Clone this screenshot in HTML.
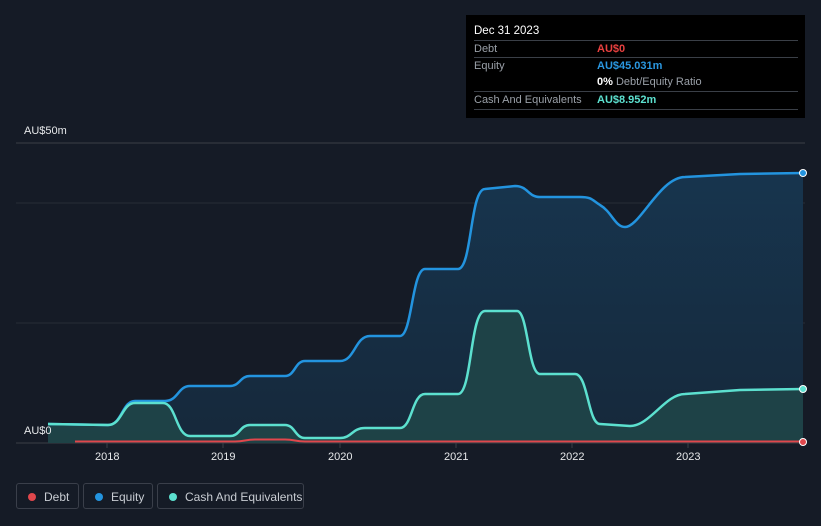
<!DOCTYPE html>
<html><head><meta charset="utf-8"><style>
body{margin:0;width:821px;height:526px;background:#151b26;font-family:"Liberation Sans",sans-serif;overflow:hidden;position:relative}
.tt{position:absolute;left:466px;top:15px;width:339px;height:103px;background:#000;color:#fff;font-size:11px}
.tt .h{position:absolute;left:8px;top:10px;font-size:11.5px}
.row{position:absolute;left:8px;width:324px;border-top:1px solid #3a3f47;height:17px;line-height:17px;color:#9aa0a8}
.row span{position:absolute;left:123px;font-weight:bold}
.lg{position:absolute;top:483px;height:26px;border:1px solid #3a3f4a;border-radius:3px;color:#c8ccd2;font-size:12px;line-height:26px;box-sizing:border-box}
.lg i{position:absolute;left:11px;top:9px;width:8px;height:8px;border-radius:50%}
.ax{position:absolute;color:#e6e8ea;font-size:11px}
</style></head><body>
<svg width="821" height="526" style="position:absolute;left:0;top:0">
<defs><linearGradient id="g" x1="0" y1="0" x2="0" y2="1"><stop offset="0" stop-color="#173650"/><stop offset="1" stop-color="#16293c"/></linearGradient></defs>
<line x1="16" y1="143" x2="805" y2="143" stroke="#3a3f47"/>
<line x1="16" y1="203" x2="805" y2="203" stroke="#262c36"/>
<line x1="16" y1="323" x2="805" y2="323" stroke="#262c36"/>
<line x1="16" y1="443" x2="805" y2="443" stroke="#3a3f47"/>
<g stroke="#3a3f47"><line x1="107" y1="443" x2="107" y2="448"/><line x1="223" y1="443" x2="223" y2="448"/><line x1="340" y1="443" x2="340" y2="448"/><line x1="456" y1="443" x2="456" y2="448"/><line x1="572" y1="443" x2="572" y2="448"/><line x1="688" y1="443" x2="688" y2="448"/></g>
<path id="eq" d="M48,424 L108,425 C122,425 122,401 135,401 L165,401 C178,401 178,386 190,386 L230,386 C240,386 240,376 250,376 L285,376 C295,376 295,361 305,361 L340,361 C355,361 355,336 370,336 L400,336 C412,336 412,269 425,269 L458,269 C472,269 470,189 485,189 L515,186 C528,186 528,197 540,197 L580,197 C592,197 592,200 600,205 C612,212 615,227 625,227 C640,227 660,177 685,177 L740,174 L803,173 L803,443 L48,443 Z" fill="url(#g)" opacity="0.95"/>
<path d="M48,424 L108,425 C122,425 122,403 135,403 L163,403 C176,403 176,436 190,436 L230,436 C240,436 240,425 250,425 L285,425 C295,425 295,438 305,438 L340,438 C352,438 352,428 365,428 L400,428 C412,428 412,394 425,394 L458,394 C472,394 470,311 485,311 L517,311 C528,311 528,374 540,374 L575,374 C588,374 588,424 600,424 L630,426 C650,426 665,394 685,394 L740,390 L803,389 L803,443 L48,443 Z" fill="#1f4548" opacity="0.9"/>
<path d="M48,424 L108,425 C122,425 122,401 135,401 L165,401 C178,401 178,386 190,386 L230,386 C240,386 240,376 250,376 L285,376 C295,376 295,361 305,361 L340,361 C355,361 355,336 370,336 L400,336 C412,336 412,269 425,269 L458,269 C472,269 470,189 485,189 L515,186 C528,186 528,197 540,197 L580,197 C592,197 592,200 600,205 C612,212 615,227 625,227 C640,227 660,177 685,177 L740,174 L803,173" fill="none" stroke="#2394df" stroke-width="2.5"/>
<path d="M48,424 L108,425 C122,425 122,403 135,403 L163,403 C176,403 176,436 190,436 L230,436 C240,436 240,425 250,425 L285,425 C295,425 295,438 305,438 L340,438 C352,438 352,428 365,428 L400,428 C412,428 412,394 425,394 L458,394 C472,394 470,311 485,311 L517,311 C528,311 528,374 540,374 L575,374 C588,374 588,424 600,424 L630,426 C650,426 665,394 685,394 L740,390 L803,389" fill="none" stroke="#5ce0cf" stroke-width="2.5"/>
<path d="M75,441.5 L235,441.5 C245,441.5 245,439.5 255,439.5 L285,439.5 C295,439.5 295,441.5 305,441.5 L803,441.5" fill="none" stroke="#e0474c" stroke-width="2"/>
<circle cx="803" cy="173" r="3.5" fill="#2394df" stroke="#fff" stroke-width="1"/>
<circle cx="803" cy="389" r="3.5" fill="#5ce0cf" stroke="#fff" stroke-width="1"/>
<circle cx="803" cy="442" r="3.5" fill="#e0474c" stroke="#fff" stroke-width="1"/>
</svg>
<div class="ax" style="left:24px;top:125px">AU$50m</div>
<div class="ax" style="left:24px;top:425px">AU$0</div>
<div class="ax" style="left:95px;top:451px">2018</div>
<div class="ax" style="left:211px;top:451px">2019</div>
<div class="ax" style="left:328px;top:451px">2020</div>
<div class="ax" style="left:444px;top:451px">2021</div>
<div class="ax" style="left:560px;top:451px">2022</div>
<div class="ax" style="left:676px;top:451px">2023</div>
<div class="tt"><div class="h">Dec 31 2023</div>
<div class="row" style="top:25px">Debt<span style="color:#e8403f">AU$0</span></div>
<div class="row" style="top:42px">Equity<span style="color:#2a97e0">AU$45.031m</span></div>
<div class="row" style="top:59px;border-top:none"><span style="color:#fff">0% <b style="color:#9aa0a8;font-weight:normal">Debt/Equity Ratio</b></span></div>
<div class="row" style="top:76px">Cash And Equivalents<span style="color:#5ce0cf">AU$8.952m</span></div>
<div class="row" style="top:94px;height:0"></div>
</div>
<div class="lg" style="left:16px;width:63px"><i style="background:#e0474c"></i><span style="position:absolute;left:27px">Debt</span></div>
<div class="lg" style="left:83px;width:70px"><i style="background:#2394df"></i><span style="position:absolute;left:27px">Equity</span></div>
<div class="lg" style="left:157px;width:147px"><i style="background:#5ce0cf"></i><span style="position:absolute;left:27px">Cash And Equivalents</span></div>
</body></html>
